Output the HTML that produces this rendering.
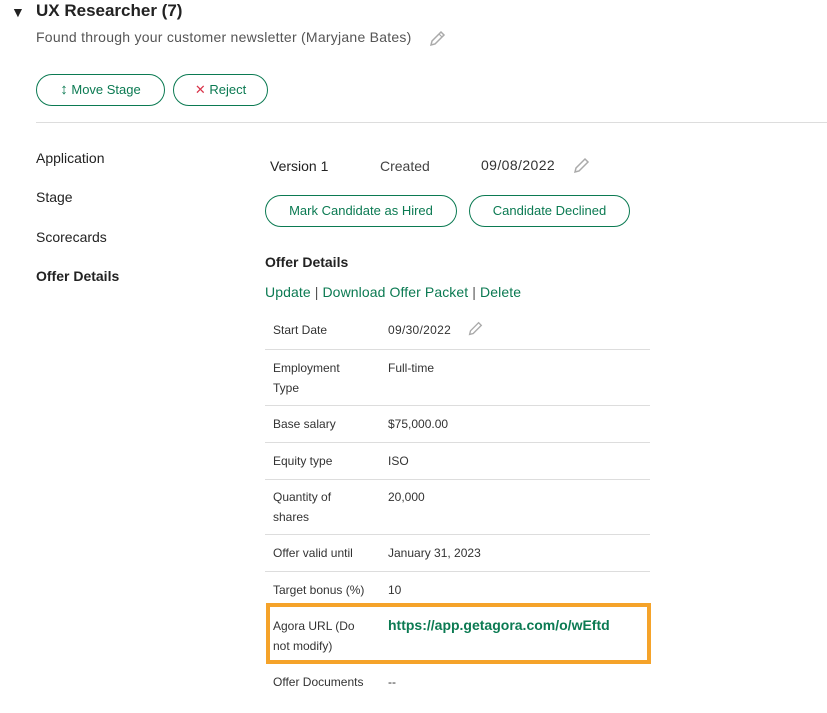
<!DOCTYPE html>
<html><head><meta charset="utf-8"><style>
*{margin:0;padding:0;box-sizing:border-box}
body{width:827px;height:713px;background:#fff;font-family:"Liberation Sans",sans-serif;color:#222;position:relative;overflow:hidden}
.a{position:absolute;white-space:nowrap}
.btn{position:absolute;border:1px solid #0b7a52;border-radius:16px;color:#0b7a52;font-size:13px;text-align:center;line-height:30px;height:32px}
.g{color:#0b7a52}
.t{font-size:12px;color:#333;line-height:20px}
.hr{position:absolute;left:265px;width:385px;height:1px;background:#ddd}
</style></head><body>
<div class="a" style="left:11px;top:4px;font-size:14px">▼</div>
<div class="a" style="left:36px;top:0px;font-size:17px;font-weight:bold;line-height:22px;color:#222">UX Researcher (7)</div>
<div class="a" style="left:36px;top:29px;font-size:14px;color:#555;letter-spacing:0.25px">Found through your customer newsletter (Maryjane Bates)</div>
<svg class="a" style="left:427px;top:29px" width="20" height="20" viewBox="0 0 20 20"><path d="M4 16 L5 12 L14 3 L17 6 L8 15 Z" fill="none" stroke="#aaa" stroke-width="1.5"/><path d="M12 5 L15 8" stroke="#aaa" stroke-width="1.2"/></svg>
<div class="btn" style="left:36px;top:74px;width:129px"><span style="font-size:15px">↕</span> Move Stage</div>
<div class="btn" style="left:173px;top:74px;width:95px"><span style="color:#d9344a">✕</span> Reject</div>
<div class="a" style="left:36px;top:122px;width:791px;height:1px;background:#ddd"></div>
<div class="a" style="left:36px;top:150px;font-size:14px">Application</div>
<div class="a" style="left:36px;top:189px;font-size:14px">Stage</div>
<div class="a" style="left:36px;top:229px;font-size:14px">Scorecards</div>
<div class="a" style="left:36px;top:268px;font-size:14px;font-weight:bold">Offer Details</div>
<div class="a" style="left:270px;top:158px;font-size:14px">Version 1</div>
<div class="a" style="left:380px;top:158px;font-size:14px;color:#444">Created</div>
<div class="a" style="left:481px;top:157px;font-size:14px;color:#333;letter-spacing:0.4px">09/08/2022</div>
<svg class="a" style="left:571px;top:156px" width="20" height="20" viewBox="0 0 20 20"><path d="M4 16 L5 12 L14 3 L17 6 L8 15 Z" fill="none" stroke="#aaa" stroke-width="1.5"/></svg>
<div class="btn" style="left:265px;top:195px;width:192px">Mark Candidate as Hired</div>
<div class="btn" style="left:469px;top:195px;width:161px">Candidate Declined</div>
<div class="a" style="left:265px;top:254px;font-size:14px;font-weight:bold">Offer Details</div>
<div class="a g" style="left:265px;top:284px;font-size:14px;letter-spacing:0.1px">Update <span style="color:#555">|</span> Download Offer Packet <span style="color:#555">|</span> Delete</div>
<div class="a t" style="left:273px;top:320px">Start Date</div><div class="a t" style="left:388px;top:320px;letter-spacing:0.3px">09/30/2022</div>
<svg class="a" style="left:466px;top:320px" width="18" height="18" viewBox="0 0 20 20"><path d="M4 16 L5 12 L14 3 L17 6 L8 15 Z" fill="none" stroke="#aaa" stroke-width="1.5"/></svg>
<div class="hr" style="top:349px"></div>
<div class="a t" style="left:273px;top:358px">Employment<br>Type</div><div class="a t" style="left:388px;top:358px">Full-time</div>
<div class="hr" style="top:405px"></div>
<div class="a t" style="left:273px;top:414px">Base salary</div><div class="a t" style="left:388px;top:414px">$75,000.00</div>
<div class="hr" style="top:442px"></div>
<div class="a t" style="left:273px;top:451px">Equity type</div><div class="a t" style="left:388px;top:451px">ISO</div>
<div class="hr" style="top:479px"></div>
<div class="a t" style="left:273px;top:487px">Quantity of<br>shares</div><div class="a t" style="left:388px;top:487px">20,000</div>
<div class="hr" style="top:534px"></div>
<div class="a t" style="left:273px;top:543px">Offer valid until</div><div class="a t" style="left:388px;top:543px">January 31, 2023</div>
<div class="hr" style="top:571px"></div>
<div class="a t" style="left:273px;top:580px">Target bonus (%)</div><div class="a t" style="left:388px;top:580px">10</div>
<div class="a" style="left:266px;top:603px;width:385px;height:61px;border:4px solid #f5a32a"></div>
<div class="a t" style="left:273px;top:616px">Agora URL (Do<br>not modify)</div>
<div class="a g" style="left:388px;top:617px;font-size:14px;font-weight:bold">https://app.getagora.com/o/wEftd</div>
<div class="a t" style="left:273px;top:672px">Offer Documents</div><div class="a t" style="left:388px;top:672px">--</div>
</body></html>
